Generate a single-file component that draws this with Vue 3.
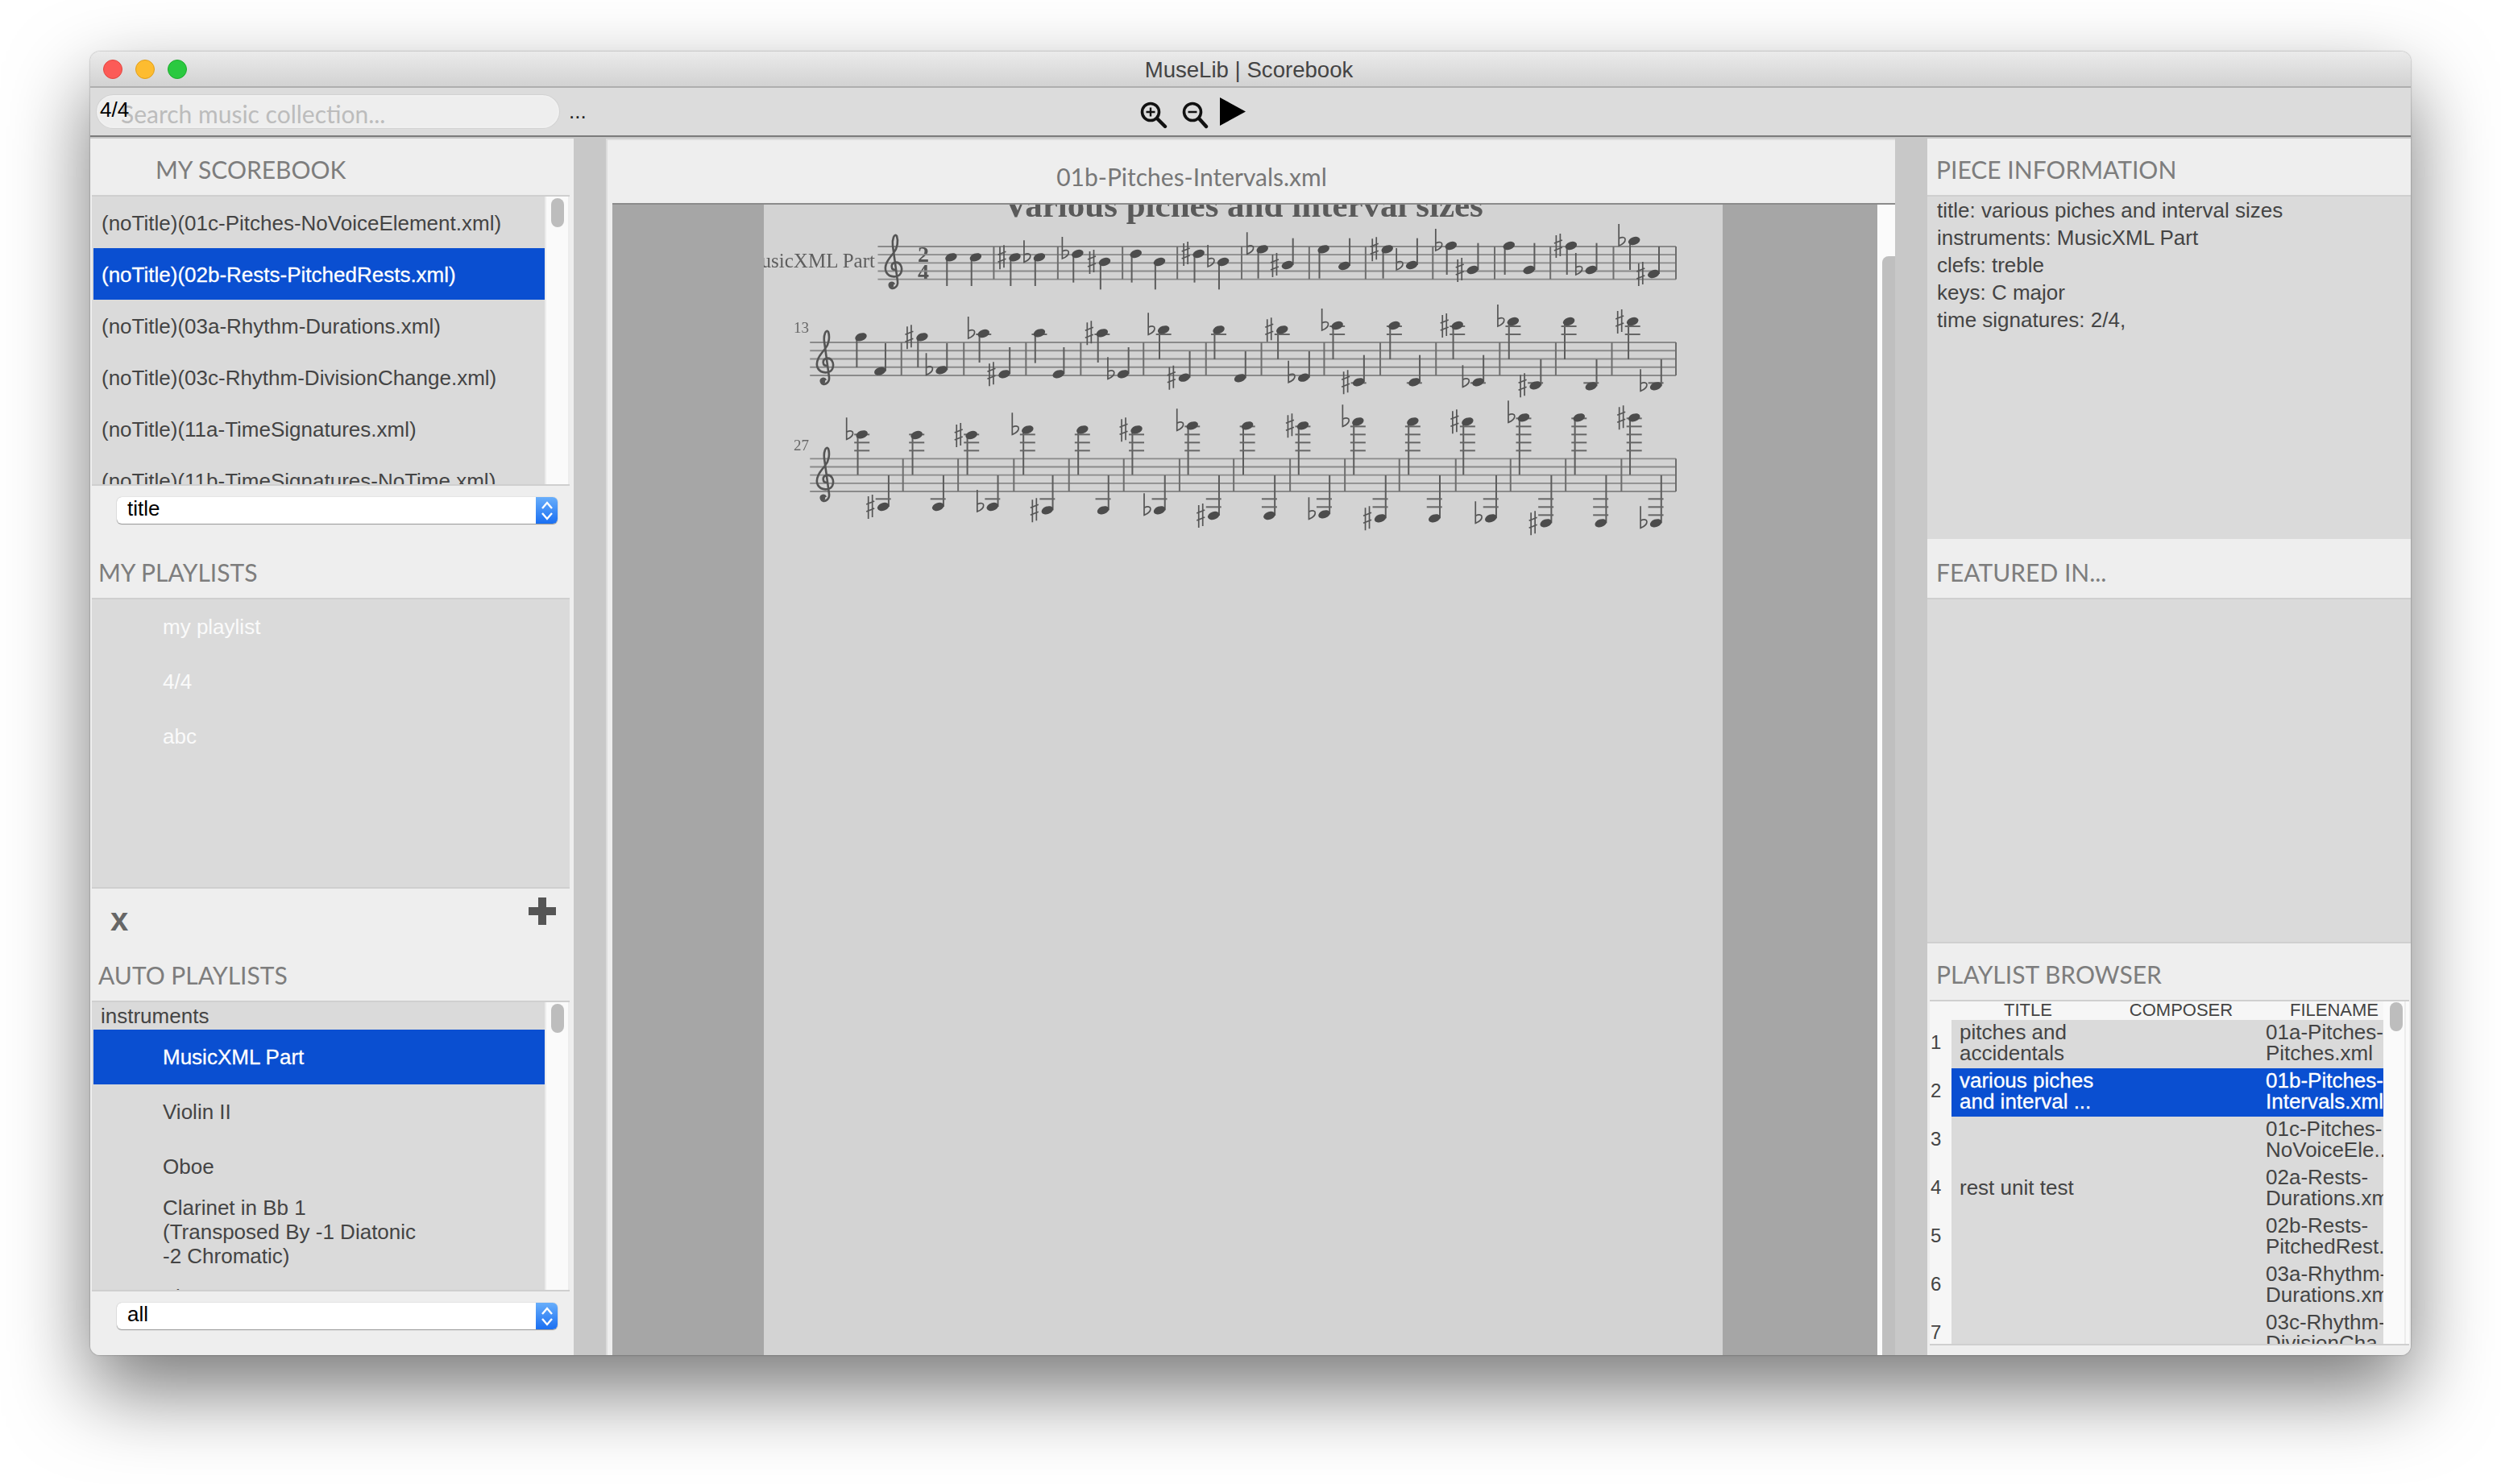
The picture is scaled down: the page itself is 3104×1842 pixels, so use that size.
<template>
  <div class="desktop">
    <div class="window">
      <div class="titlebar">
        <div class="lights">
          <span class="light red"></span>
          <span class="light yellow"></span>
          <span class="light green"></span>
        </div>
        <div class="app-title">MuseLib | Scorebook</div>
      </div>

      <div class="toolbar">
        <div class="search">
          <span class="search-hint">Search music collection...</span>
          <span class="search-count">4/4</span>
        </div>
        <span class="more">...</span>
        <div class="tools">
          <svg class="tool" width="34" height="36" viewBox="0 0 34 36">
            <circle cx="13" cy="14" r="10.5" fill="none" stroke="#111" stroke-width="3.6" />
            <path d="M13 8.5v11M7.5 14h11" stroke="#111" stroke-width="2.4" />
            <path d="M21 22l10 10" stroke="#111" stroke-width="4.4" stroke-linecap="round" />
          </svg>
          <svg class="tool" width="34" height="36" viewBox="0 0 34 36">
            <circle cx="14" cy="14" r="10.5" fill="none" stroke="#111" stroke-width="3.6" />
            <path d="M8.5 14h11" stroke="#111" stroke-width="2.6" />
            <path d="M22 22l9 10" stroke="#111" stroke-width="4.4" stroke-linecap="round" />
          </svg>
          <svg class="play" width="32" height="36" viewBox="0 0 32 36">
            <path d="M0 0L32 17.5L0 35z" fill="#000" />
          </svg>
        </div>
      </div>

      <div class="main">
        <aside class="left">
          <div class="section-title scorebook-title">MY SCOREBOOK</div>
          <div class="list">
            <div class="rows">
              <div
                v-for="item in scorebook"
                :key="item"
                class="row"
                :class="{ selected: item === selectedScore }"
              >
                {{ item }}
              </div>
            </div>
            <div class="scroll"><span class="thumb"></span></div>
          </div>
          <div class="combo-row">
            <div class="combo">
              <span>title</span>
              <span class="combo-arrows">
                <svg width="16" height="26" viewBox="0 0 16 26">
                  <path d="M2 10l6-7 6 7M2 16l6 7 6-7" fill="none" stroke="#fff" stroke-width="2.4" />
                </svg>
              </span>
            </div>
          </div>

          <div class="section-title">MY PLAYLISTS</div>
          <div class="list plain">
            <div class="rows">
              <div v-for="name in playlists" :key="name" class="row indented pale">{{ name }}</div>
            </div>
          </div>
          <div class="list-actions">
            <span class="remove">x</span>
            <svg width="34" height="34" viewBox="0 0 34 34">
              <path d="M12 0h10v12h12v10H22v12H12V22H0V12h12z" fill="#555" />
            </svg>
          </div>

          <div class="section-title">AUTO PLAYLISTS</div>
          <div class="list">
            <div class="rows">
              <div class="group-label">instruments</div>
              <div
                v-for="inst in instruments"
                :key="inst.name"
                class="row indented"
                :class="{ selected: inst.selected, tall: inst.lines }"
              >
                <template v-if="inst.lines">
                  <div v-for="line in inst.lines" :key="line">{{ line }}</div>
                </template>
                <template v-else>{{ inst.name }}</template>
              </div>
            </div>
            <div class="scroll"><span class="thumb"></span></div>
          </div>
          <div class="combo-row">
            <div class="combo">
              <span>all</span>
              <span class="combo-arrows">
                <svg width="16" height="26" viewBox="0 0 16 26">
                  <path d="M2 10l6-7 6 7M2 16l6 7 6-7" fill="none" stroke="#fff" stroke-width="2.4" />
                </svg>
              </span>
            </div>
          </div>
        </aside>

        <div class="splitter"></div>

        <section class="center">
          <div class="score-name">01b-Pitches-Intervals.xml</div>
          <div class="score-body">
            <div class="edge"></div>
            <div class="score-view">
              <div class="margin-left"></div>
              <div class="page">
                <svg class="sheet" width="1190" height="1428" viewBox="948 254 1190 1428">
                  <text x="1543" y="269" text-anchor="middle" class="sheet-title">Various piches and interval sizes</text>
                  <text x="1086" y="332" text-anchor="end" class="part-name">MusicXML Part</text>
                  <text x="1146" y="325" text-anchor="middle" class="time-sig">2</text>
                  <text x="1146" y="347" text-anchor="middle" class="time-sig">4</text>
                  <text x="985" y="413" class="measure-no">13</text>
                  <text x="985" y="559" class="measure-no">27</text>
                  <g v-for="s in score" :key="s.id">
                    <path v-for="l in s.staff" :key="l" :d="l" class="staff" />
                    <path v-for="b in s.bars" :key="b" :d="b" class="bar" />
                    <g :transform="`translate(${s.clefX} ${s.clefY})`">
                      <path class="clef" d="M15 46C10 46 9 39 14 37C21 35 25 43 22 50C19 56 8 56 4 49C0 41 7 32 13 25C18 19 19 10 17 4C14 0 11 8 12 16L18 60C19 68 10 72 8 66C7 62 12 60 14 64" />
                      <circle cx="10" cy="65" r="3.2" fill="#555" />
                    </g>
                    <g v-for="n in s.notes" :key="n.key">
                      <path :d="n.stem" class="stem" />
                      <path v-for="l in n.ledgers" :key="l" :d="l" class="ledger" />
                      <ellipse :cx="n.x" :cy="n.y" rx="7.5" ry="4.8" :transform="`rotate(-20 ${n.x} ${n.y})`" fill="#4c4c4c" />
                      <path v-if="n.acc" :d="n.acc" class="accidental" />
                    </g>
                  </g>
                </svg>
              </div>
              <div class="margin-right"></div>
              <div class="page-scroll"><span class="page-thumb"></span></div>
            </div>
          </div>
        </section>

        <div class="splitter"></div>

        <aside class="right">
          <div class="section-title right-title">PIECE INFORMATION</div>
          <div class="info">
            <div v-for="line in pieceInfo" :key="line">{{ line }}</div>
          </div>
          <div class="section-title right-title featured-title">FEATURED IN...</div>
          <div class="featured"></div>
          <div class="section-title right-title browser-title">PLAYLIST BROWSER</div>
          <div class="browser">
            <div class="table-wrap">
              <div class="table-head">
                <span class="corner"></span>
                <span class="head-cell">TITLE</span>
                <span class="head-cell">COMPOSER</span>
                <span class="head-cell">FILENAME</span>
              </div>
              <div v-for="(r, i) in browser" :key="i" class="table-row">
                <span class="num">{{ i + 1 }}</span>
                <div class="cells" :class="{ selected: i === 1 }">
                  <div class="cell">
                    <div v-for="t in r.title" :key="t">{{ t }}</div>
                  </div>
                  <div class="cell"></div>
                  <div class="cell">
                    <div v-for="f in r.file" :key="f">{{ f }}</div>
                  </div>
                </div>
              </div>
            </div>
            <div class="scroll table-scroll"><span class="thumb"></span></div>
          </div>
        </aside>
      </div>
    </div>
  </div>
</template>

<script setup>
const selectedScore = '(noTitle)(02b-Rests-PitchedRests.xml)'
const scorebook = [
  '(noTitle)(01c-Pitches-NoVoiceElement.xml)',
  selectedScore,
  '(noTitle)(03a-Rhythm-Durations.xml)',
  '(noTitle)(03c-Rhythm-DivisionChange.xml)',
  '(noTitle)(11a-TimeSignatures.xml)',
  '(noTitle)(11b-TimeSignatures-NoTime.xml)'
]
const playlists = ['my playlist', '4/4', 'abc']
const instruments = [
  { name: 'MusicXML Part', selected: true },
  { name: 'Violin II' },
  { name: 'Oboe' },
  { name: 'Clarinet', lines: ['Clarinet in Bb 1', '(Transposed By -1 Diatonic', '-2 Chromatic)'] },
  { name: 'Flute I' }
]
const pieceInfo = [
  'title: various piches and interval sizes',
  'instruments: MusicXML Part',
  'clefs: treble',
  'keys: C major',
  'time signatures: 2/4,'
]
const browser = [
  { title: ['pitches and', 'accidentals'], file: ['01a-Pitches-', 'Pitches.xml'] },
  { title: ['various piches', 'and interval ...'], file: ['01b-Pitches-', 'Intervals.xml'] },
  { title: [], file: ['01c-Pitches-', 'NoVoiceEle...'] },
  { title: ['rest unit test'], file: ['02a-Rests-', 'Durations.xml'] },
  { title: [], file: ['02b-Rests-', 'PitchedRest...'] },
  { title: [], file: ['03a-Rhythm-', 'Durations.xml'] },
  { title: [], file: ['03c-Rhythm-', 'DivisionCha...'] }
]

// score positions were read off at 2.529x horizontally and 3x vertically
const toX = (g) => 940 + g / 2.529
const toY = (z) => 230 + z / 3
const RIGHT = 1517

const systems = [
  {
    id: 1, top: 228, bottom: 350, start: 378, clefX: 1096, clefY: 289, slack: 4,
    bars: [742, 943, 1146, 1318, 1520, RIGHT + 215, RIGHT + 392, RIGHT + 603, RIGHT + 797, RIGHT + 972, RIGHT + 1170, RIGHT + 1366],
    notes: [[608, 268, 375], [685, 268, 375], [808, 268, 375, '#'], [885, 268, 375, 'b'], [1005, 255, 362, 'b'], [1090, 285, 388, '#'], [1188, 255, 362], [1262, 285, 388], [1385, 255, 362, '#'], [1462, 285, 388, 'b']],
    rest: [[68, 238, 347, 'b'], [147, 297, 197, '#'], [260, 238, 347], [325, 300, 197], [460, 238, 347, '#'], [537, 297, 197, 'b'], [660, 225, 333, 'b'], [728, 315, 215, '#'], [842, 225, 333], [905, 315, 215], [1037, 225, 333, '#'], [1100, 315, 215, 'b'], [1235, 207, 315, 'b'], [1296, 330, 228, '#']]
  },
  {
    id: 2, top: 585, bottom: 708, start: 165, clefX: 1011, clefY: 408, slack: 4,
    bars: [452, 648, 843, 1015, 1212, 1408, RIGHT + 65, RIGHT + 262, RIGHT + 438, RIGHT + 613, RIGHT + 813, RIGHT + 989, RIGHT + 1165, RIGHT + 1366],
    notes: [[325, 565, 678], [385, 692, 588], [517, 565, 678, '#'], [578, 688, 588, 'b'], [710, 552, 660, 'b'], [775, 703, 603, '#'], [885, 550, 662], [945, 703, 603], [1082, 550, 660, '#'], [1148, 703, 603, 'b'], [1275, 538, 648, 'b'], [1340, 716, 618, '#'], [1448, 538, 648], [1515, 718, 618]],
    rest: [[130, 538, 648, '#'], [198, 716, 618, 'b'], [303, 522, 648, 'b'], [370, 733, 632, '#'], [482, 522, 648], [545, 733, 632], [680, 522, 648, '#'], [745, 733, 632, 'b'], [855, 507, 648, 'b'], [925, 745, 648, '#'], [1030, 507, 648], [1100, 748, 648], [1230, 507, 648, '#'], [1303, 748, 648, 'b']]
  },
  {
    id: 3, top: 1018, bottom: 1140, start: 165, clefX: 1011, clefY: 553, slack: -14,
    bars: [457, 630, 805, 978, 1150, 1325, 1495, RIGHT + 155, RIGHT + 327, RIGHT + 498, RIGHT + 675, RIGHT + 847, RIGHT + 1020, RIGHT + 1195, RIGHT + 1366],
    notes: [[328, 928, 1078, 'b'], [395, 1197, 1080, '#'], [500, 930, 1078], [567, 1197, 1080], [672, 930, 1078, '#'], [738, 1197, 1080, 'b'], [848, 910, 1078, 'b'], [910, 1210, 1080, '#'], [1020, 910, 1078], [1085, 1210, 1080], [1190, 910, 1078, '#'], [1262, 1210, 1080, 'b'], [1365, 895, 1078, 'b'], [1432, 1230, 1080, '#'], [1538, 895, 1078]],
    rest: [[90, 1230, 1080], [195, 895, 1078, '#'], [262, 1225, 1080, 'b'], [368, 880, 1078, 'b'], [438, 1240, 1080, '#'], [540, 880, 1078], [608, 1240, 1080], [712, 880, 1078, '#'], [785, 1240, 1080, 'b'], [888, 865, 1078, 'b'], [958, 1258, 1080, '#'], [1062, 865, 1078], [1130, 1258, 1080], [1235, 865, 1078, '#'], [1303, 1258, 1080, 'b']]
  }
]

const accidentalPath = (type, x, y) => {
  if (type === 'b') {
    const ax = x - 19
    return `M${ax} ${y - 21}V${y + 6}C${ax + 11} ${y + 2} ${ax + 10} ${y - 8} ${ax} ${y - 3}`
  }
  const ax = x - 16
  return `M${ax - 2.5} ${y - 13}V${y + 15}M${ax + 2.5} ${y - 15}V${y + 13}M${ax - 5} ${y - 3}L${ax + 5} ${y - 7}M${ax - 5} ${y + 6}L${ax + 5} ${y + 2}`
}

const ledgersFor = (sys, g, z) => {
  const out = []
  for (let l = sys.top - 30; l >= z - 8; l -= 30) out.push(l)
  for (let l = sys.bottom + 28; l <= z + sys.slack; l += 30) out.push(l)
  return out.map((l) => `M${toX(g - 24)} ${toY(l)}H${toX(g + 24)}`)
}

const buildNote = (sys, [g, z, end, acc]) => {
  const up = end < z
  const stemG = up ? g + 17 : g - 13
  const x = toX(g)
  const y = toY(z)
  return {
    key: g,
    x,
    y,
    stem: `M${toX(stemG)} ${y}V${toY(end)}`,
    ledgers: ledgersFor(sys, g, z),
    acc: acc ? accidentalPath(acc, x, y) : null
  }
}

const score = systems.map((sys) => {
  const gap = (sys.bottom - sys.top) / 4
  const staff = [0, 1, 2, 3, 4].map((i) => {
    const y = toY(sys.top + gap * i)
    return `M${toX(sys.start)} ${y}H${toX(RIGHT + 1366)}`
  })
  const bars = sys.bars.map((g) => `M${toX(g)} ${toY(sys.top)}V${toY(sys.bottom)}`)
  const notes = [
    ...sys.notes.map((n) => buildNote(sys, n)),
    ...sys.rest.map(([g, ...r]) => buildNote(sys, [g + RIGHT, ...r]))
  ]
  return { id: sys.id, staff, bars, notes, clefX: sys.clefX, clefY: sys.clefY }
})
</script>

<style scoped>
.desktop {
  height: 1842px;
  box-sizing: border-box;
  padding: 64px 112px 0;
  overflow: hidden;
  background: #fff;
}

.window {
  position: relative;
  width: 2880px;
  height: 1618px;
  border-radius: 12px;
  box-shadow: 0 44px 100px rgba(0, 0, 0, 0.53), 0 0 2px rgba(0, 0, 0, 0.45);
  display: flex;
  flex-direction: column;
  overflow: hidden;
  font-family: "Liberation Sans", Arial, sans-serif;
  font-size: 26px;
  color: #444;
}

.titlebar {
  height: 43px;
  flex: none;
  display: flex;
  align-items: center;
  position: relative;
  background: linear-gradient(#ebebeb, #d2d2d2);
  border-bottom: 2px solid #aeaeae;
}

.lights {
  display: flex;
  gap: 16px;
  padding-left: 16px;
}

.light {
  width: 24px;
  height: 24px;
  border-radius: 50%;
  box-sizing: border-box;
}

.red { background: #fc5b57; border: 1px solid #e2463f; }
.yellow { background: #fdbc30; border: 1px solid #e09e1a; }
.green { background: #2ac940; border: 1px solid #1eab2d; }

.app-title {
  position: absolute;
  left: 0;
  right: 4px;
  top: 7px;
  text-align: center;
  font-size: 27.6px;
  line-height: 32px;
  color: #444;
}

.toolbar {
  height: 59px;
  flex: none;
  display: flex;
  align-items: flex-start;
  background: #dcdcdc;
  border-bottom: 2px solid #7b7b7b;
}

.search {
  position: relative;
  width: 574px;
  height: 41px;
  margin: 9px 0 0 8px;
  box-sizing: border-box;
  border: 2px solid #f0f0f0;
  border-radius: 21px;
  box-shadow: 0 0 0 1px #d2d2d2;
  background: #eeeeee;
}

.search-hint {
  position: absolute;
  left: 28px;
  top: 2px;
  font-family: Lato, sans-serif;
  font-size: 30px;
  line-height: 38px;
  color: #bcbcbc;
  white-space: nowrap;
}

.search-count {
  position: absolute;
  left: 2px;
  top: 1px;
  font-size: 26px;
  line-height: 30px;
  color: #000;
}

.more {
  margin: 14px 0 0 12px;
  font-size: 26px;
  line-height: 30px;
  color: #222;
}

.tools {
  position: absolute;
  left: 1303px;
  top: 57px;
  display: flex;
  align-items: flex-start;
}

.tool {
  margin-top: 4px;
  margin-right: 17px;
}

.play {
  margin-left: -3px;
}

.main {
  flex: 1;
  display: flex;
  min-height: 0;
  padding-top: 2px;
  background: #c8c8c8;
}

.left,
.right {
  background: #eeeeee;
  display: flex;
  flex-direction: column;
  width: 600px;
  flex: none;
}

.section-title {
  height: 70px;
  flex: none;
  box-sizing: border-box;
  padding: 10px 0 0 10px;
  font-family: Lato, sans-serif;
  font-size: 30px;
  line-height: 56px;
  color: #7d7d7d;
}

.scorebook-title {
  padding-left: 81px;
}

.list {
  height: 361px;
  flex: none;
  display: flex;
  margin: 0 5px 0 2px;
  border-top: 2px solid #cfcfcf;
  border-bottom: 2px solid #cfcfcf;
  box-sizing: border-box;
  background: #dadada;
  overflow: hidden;
}

.rows {
  flex: 1;
  min-width: 0;
  overflow: hidden;
}

.row {
  height: 64px;
  margin-left: 2px;
  padding-left: 10px;
  line-height: 66px;
  white-space: nowrap;
  color: #444;
}

.row.selected {
  background: #0a4fd1;
  color: #fff;
  -webkit-text-stroke: 0.3px #fff;
}

.row.indented {
  height: 68px;
  padding-left: 86px;
  line-height: 68px;
}

.row.tall {
  height: 94px;
  display: flex;
  flex-direction: column;
  justify-content: center;
  line-height: 30px;
}

.row.pale {
  color: #fafafa;
}

.group-label {
  height: 34px;
  padding-left: 11px;
  line-height: 34px;
}

.scroll {
  width: 31px;
  flex: none;
  background: #fafafa;
  border-left: 2px solid #ececec;
  border-right: 2px solid #ececec;
  box-sizing: border-box;
}

.thumb {
  display: block;
  width: 16px;
  height: 36px;
  margin: 2px 0 0 6px;
  border-radius: 8px;
  background: #bdbdbd;
}

.combo-row {
  height: 69px;
  flex: none;
  padding: 14px 0 0 33px;
  box-sizing: border-box;
}

.combo {
  width: 547px;
  height: 33px;
  display: flex;
  justify-content: space-between;
  padding-left: 13px;
  box-sizing: border-box;
  border-radius: 6px;
  background: #fff;
  box-shadow: 0 1px 1px rgba(0, 0, 0, 0.35), 0 0 1px rgba(0, 0, 0, 0.35);
  color: #000;
  line-height: 28px;
  overflow: hidden;
}

.combo-arrows {
  width: 27px;
  display: flex;
  align-items: center;
  justify-content: center;
  background: linear-gradient(#68aefb, #1a6ff2);
}

.list-actions {
  height: 69px;
  flex: none;
  display: flex;
  justify-content: space-between;
  align-items: flex-start;
  padding: 11px 22px 0 25px;
  box-sizing: border-box;
}

.remove {
  margin-top: -1px;
  font-size: 40px;
  line-height: 56px;
  font-weight: 700;
  color: #666;
}

.splitter {
  width: 40px;
  flex: none;
  background: #c8c8c8;
}

.center {
  flex: 1;
  min-width: 0;
  display: flex;
  flex-direction: column;
  background: #eeeeee;
  border-top: 2px solid #dcdcdc;
  border-left: 2px solid #dcdcdc;
}

.score-name {
  height: 78px;
  flex: none;
  box-sizing: border-box;
  padding: 21px 148px 0 0;
  text-align: center;
  font-family: Lato, sans-serif;
  font-size: 30px;
  line-height: 48px;
  color: #777;
}

.score-body {
  flex: 1;
  min-height: 0;
  display: flex;
}

.edge {
  width: 6px;
  flex: none;
}

.score-view {
  flex: 1;
  min-width: 0;
  display: flex;
  border-top: 2px solid #8b8b8b;
}

.margin-left {
  width: 188px;
  flex: none;
  background: #a6a6a6;
}

.margin-right {
  flex: 1;
  background: #a6a6a6;
}

.page {
  width: 1190px;
  flex: none;
  background: #d3d3d3;
  overflow: hidden;
}

.sheet {
  display: block;
  filter: blur(0.7px);
}

.sheet-title {
  font-family: "Liberation Serif", serif;
  font-weight: 700;
  font-size: 43px;
  fill: #5a5a5a;
}

.part-name {
  font-family: "Liberation Serif", serif;
  font-size: 25px;
  fill: #5e5e5e;
}

.time-sig {
  font-family: "Liberation Serif", serif;
  font-weight: 700;
  font-size: 28px;
  fill: #555;
}

.measure-no {
  font-family: "Liberation Serif", serif;
  font-size: 19px;
  fill: #666;
}

.staff {
  stroke: #8a8a8a;
  stroke-width: 1.8;
  fill: none;
}

.bar {
  stroke: #6e6e6e;
  stroke-width: 2;
  fill: none;
}

.stem {
  stroke: #5c5c5c;
  stroke-width: 2;
  fill: none;
}

.ledger {
  stroke: #666;
  stroke-width: 2;
  fill: none;
}

.accidental {
  stroke: #555;
  stroke-width: 1.7;
  fill: none;
}

.clef {
  stroke: #555;
  stroke-width: 2.6;
  fill: none;
}

.page-scroll {
  width: 22px;
  flex: none;
  background: #fbfbfb;
  position: relative;
}

.page-thumb {
  position: absolute;
  left: 6px;
  right: 0;
  top: 64px;
  bottom: 0;
  border-radius: 8px 0 0 0;
  background: #bfbfbf;
}

.right-title {
  padding-top: 10px;
  padding-left: 11px;
}

.info {
  height: 427px;
  flex: none;
  box-sizing: border-box;
  padding: 0 0 0 12px;
  border-top: 2px solid #cfcfcf;
  background: #dadada;
  line-height: 34px;
}

.featured-title {
  height: 73px;
  padding-top: 13px;
}

.featured {
  height: 429px;
  flex: none;
  border-top: 2px solid #cfcfcf;
  border-bottom: 2px solid #cfcfcf;
  background: #dadada;
  box-sizing: border-box;
}

.browser-title {
  height: 70px;
  padding-top: 10px;
}

.browser {
  height: 429px;
  flex: none;
  margin: 0 2px 0 3px;
  display: flex;
  border-top: 2px solid #cfcfcf;
  border-bottom: 2px solid #cfcfcf;
  box-sizing: border-box;
  overflow: hidden;
  background: #fafafa;
}

.table-wrap {
  width: 563px;
  flex: none;
  overflow: hidden;
}

.table-head {
  display: flex;
  height: 23px;
  background: #f6f6f6;
  font-size: 22px;
  line-height: 21px;
}

.corner {
  width: 27px;
  flex: none;
}

.head-cell {
  width: 190px;
  flex: none;
  text-align: center;
}

.table-row {
  display: flex;
  height: 60px;
}

.num {
  width: 27px;
  flex: none;
  padding-left: 1px;
  box-sizing: border-box;
  background: #f6f6f6;
  font-size: 24px;
  line-height: 56px;
}

.cells {
  width: 536px;
  flex: none;
  display: flex;
  background: #dadada;
  overflow: hidden;
}

.cells.selected {
  background: #0a4fd1;
  color: #fff;
  -webkit-text-stroke: 0.3px #fff;
}

.cell {
  width: 190px;
  flex: none;
  padding: 0 0 4px 10px;
  box-sizing: border-box;
  display: flex;
  flex-direction: column;
  justify-content: center;
  line-height: 26px;
  white-space: nowrap;
}

.table-scroll {
  width: 28px;
  border-left: none;
}

.table-scroll .thumb {
  margin: 1px 0 0 8px;
}
</style>

<style>
body {
  background: #fff;
}
</style>
